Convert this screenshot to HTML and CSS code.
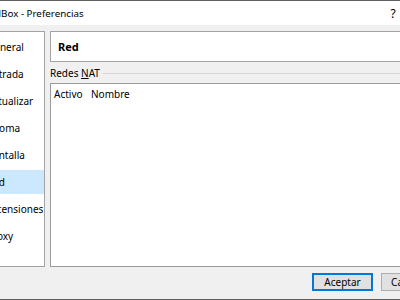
FILE: index.html
```html
<!DOCTYPE html>
<html>
<head>
<meta charset="utf-8">
<link rel="stylesheet" href="styles.css">
</head>
<body>
<div class="window">
  <div class="titlebar">
    <span class="title">VirtualBox - Preferencias</span>
    <span class="help">?</span>
    <span class="close"></span>
  </div>
  <div class="content">
    <div class="sidebar">
      <div class="item">General</div>
      <div class="item">Entrada</div>
      <div class="item">Actualizar</div>
      <div class="item">Idioma</div>
      <div class="item">Pantalla</div>
      <div class="item selected">Red</div>
      <div class="item">Extensiones</div>
      <div class="item">Proxy</div>
    </div>
    <div class="page">
      <div class="page-title">Red</div>
      <div class="group">
        <span class="group-label">Redes <u>N</u>AT</span>
        <span class="group-line"></span>
      </div>
      <div class="listview">
        <div class="lv-header">
          <span class="col col-active">Activo</span>
          <span class="col">Nombre</span>
        </div>
      </div>
    </div>
  </div>
  <div class="footer">
    <button class="btn default">Aceptar</button>
    <button class="btn">Cancelar</button>
  </div>
</div>
</body>
</html>
```
FILE: styles.css
```css
html, body {
  margin: 0;
  padding: 0;
  overflow: hidden;
  width: 400px;
  height: 300px;
  background: #f0f0f0;
}
body {
  font-family: "Noto Sans", "Open Sans", sans-serif;
  font-size: 10px;
  color: #000;
}
.window {
  box-sizing: border-box;
  width: 520px;
  height: 300px;
  margin-left: -60px;
  border-top: 1px solid #5f5f5f;
  border-bottom: 1px solid #5f5f5f;
  display: flex;
  flex-direction: column;
  background: #f0f0f0;
}
.titlebar {
  height: 24px;
  flex: none;
  background: #fff;
  display: flex;
  align-items: center;
  padding-left: 31px;
  padding-right: 7px;
}
.title {
  flex: 1;
  font-size: 9.8px;
  color: #000;
}
.help {
  width: 28px;
  text-align: center;
  font-size: 12px;
}
.close {
  width: 46px;
}
.content {
  flex: none;
  height: 236px;
  padding: 6px 8px 0 40px;
  display: flex;
  gap: 5px;
}
.sidebar {
  box-sizing: border-box;
  width: 65px;
  height: 236px;
  background: #fff;
  border: 1px solid #a3a3a3;
  padding-top: 3px;
  display: flex;
  flex-direction: column;
  gap: 3px;
}
.item {
  height: 24px;
  line-height: 24px;
  padding-left: 6px;
  white-space: nowrap;
  overflow: hidden;
}
.item.selected {
  background: #cce8ff;
}
.page {
  flex: 1;
  display: flex;
  flex-direction: column;
}
.page-title {
  box-sizing: border-box;
  height: 31px;
  background: #fff;
  border: 1px solid #a3a3a3;
  font-weight: bold;
  font-size: 11px;
  display: flex;
  align-items: center;
  padding-left: 7px;
}
.group {
  height: 21px;
  display: flex;
  align-items: center;
  gap: 3px;
}
.group-label {
  white-space: nowrap;
}
.group-line {
  flex: 1;
  height: 0;
  border-top: 1px solid #d5d5d5;
  margin-top: 1px;
}
.listview {
  box-sizing: border-box;
  flex: 1;
  background: #fff;
  border: 1px solid #9a9a9a;
}
.lv-header {
  height: 20px;
  display: flex;
  align-items: center;
}
.col {
  padding-left: 3px;
}
.col-active {
  width: 34px;
}
.footer {
  flex: 1;
  display: flex;
  justify-content: flex-end;
  align-items: flex-start;
  padding-top: 6px;
  padding-right: 18px;
  gap: 8px;
}
.btn {
  box-sizing: border-box;
  width: 61px;
  height: 18px;
  padding: 0;
  font-family: "Noto Sans", "Open Sans", sans-serif;
  font-size: 10px;
  color: #000;
  background: #e1e1e1;
  border: 1px solid #adadad;
}
.btn.default {
  border: 1px solid #0078d7;
  box-shadow: inset 0 0 0 1px #0078d7;
}
```
